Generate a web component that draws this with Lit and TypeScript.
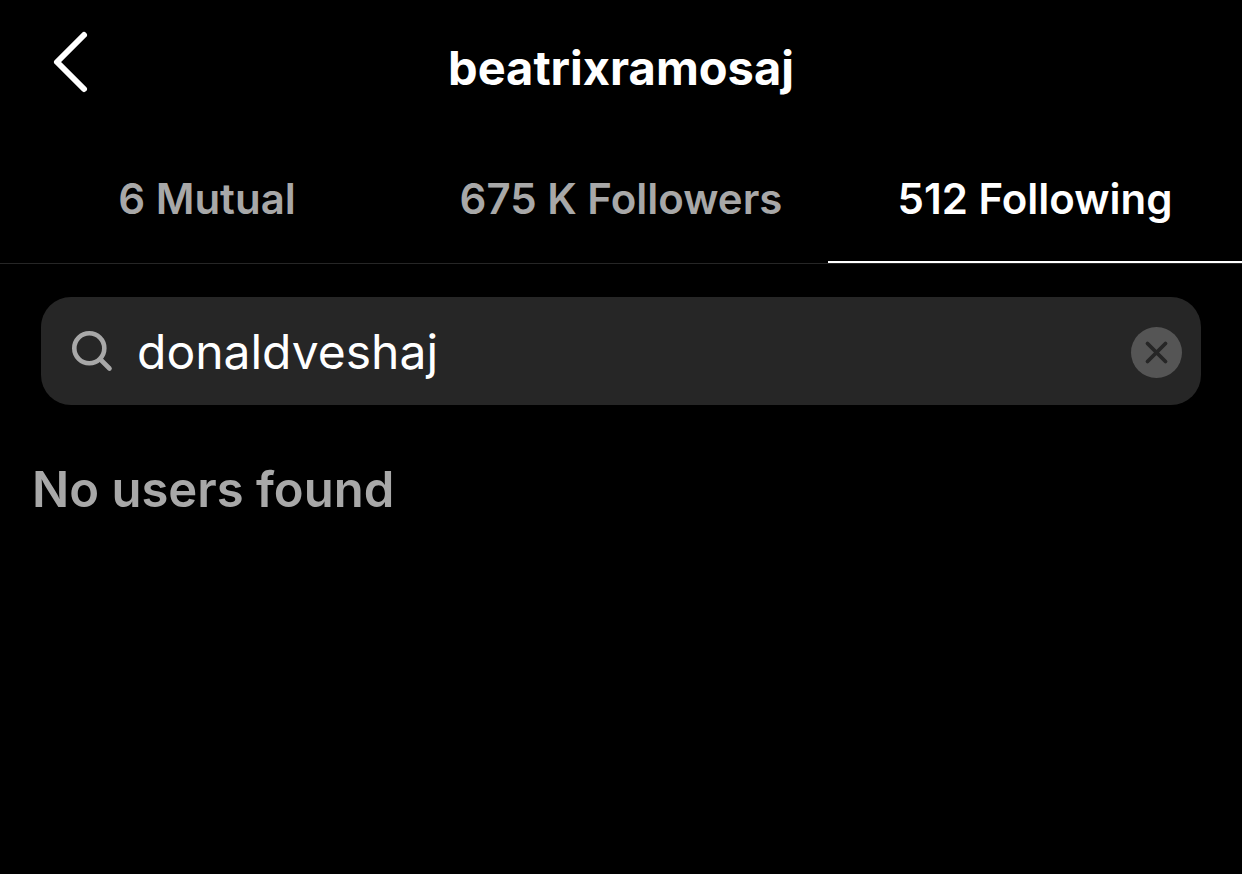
import { LitElement, html, css } from "lit";
import { customElement, state } from "lit/decorators.js";

@customElement("app-root")
class AppRoot extends LitElement {
  @state() private active = 2;
  @state() private query = "donaldveshaj";

  private tabs = ["6 Mutual", "675 K Followers", "512 Following"];

  static styles = css`
    :host {
      display: block;
      min-height: 100vh;
      background: #000;
      color: #fff;
      font-family: Inter, "Liberation Sans", sans-serif;
    }
    * {
      box-sizing: border-box;
    }
    button {
      border: 0;
      padding: 0;
      background: none;
      color: inherit;
      font: inherit;
      cursor: pointer;
    }
    svg {
      display: block;
      fill: none;
      stroke: currentColor;
      stroke-linecap: round;
      stroke-linejoin: round;
    }
    .bar {
      display: grid;
      grid-template-columns: 96px 1fr 96px;
      align-items: center;
      height: 136px;
      padding: 0 24px;
    }
    .back {
      display: flex;
      justify-content: center;
      align-items: center;
      height: 80px;
      margin-bottom: 12px;
    }
    h1 {
      margin: 0;
      text-align: center;
      font-size: 47px;
      line-height: 60px;
      font-weight: 700;
    }
    .tabs {
      display: grid;
      grid-template-columns: repeat(3, 1fr);
      height: 128px;
      border-bottom: 1px solid #262626;
    }
    .tab {
      border-bottom: 2px solid transparent;
      color: #a8a8a8;
      font-size: 42px;
      font-weight: 600;
      white-space: nowrap;
    }
    .tab.active {
      color: #fff;
      border-color: #fff;
    }
    .search {
      display: flex;
      align-items: center;
      height: 108px;
      margin: 33px 41px 0;
      padding: 2px 19px 0 30px;
      border-radius: 30px;
      background: #262626;
    }
    .lens {
      flex: none;
      color: #a8a8a8;
    }
    input {
      flex: 1;
      min-width: 0;
      margin: 0 24px;
      padding: 0;
      border: 0;
      outline: 0;
      background: none;
      color: #fff;
      font: 400 48px/64px Inter, "Liberation Sans", sans-serif;
    }
    .clear {
      flex: none;
      width: 51px;
      height: 51px;
      border-radius: 50%;
      background: #555;
      color: #262626;
    }
    .empty {
      margin: 53px 32px 0;
      color: #a8a8a8;
      font-size: 49px;
      line-height: 64px;
      font-weight: 600;
    }
  `;

  render() {
    return html`
      <header class="bar">
        <button class="back" aria-label="Back">
          <svg width="40" height="64" viewBox="0 0 40 64" stroke-width="6">
            <path d="M32 5 5 32 32 59" />
          </svg>
        </button>
        <h1>beatrixramosaj</h1>
      </header>
      <nav class="tabs" role="tablist">
        ${this.tabs.map(
          (label, i) => html`<button
            class="tab ${i === this.active ? "active" : ""}"
            role="tab"
            aria-selected=${i === this.active}
            @click=${() => (this.active = i)}
          >${label}</button>`
        )}
      </nav>
      <main>
        <div class="search">
          <svg class="lens" width="42" height="42" viewBox="0 0 42 42" stroke-width="4.6">
            <circle cx="18.3" cy="17.3" r="15" />
            <path d="M29.5 28.5 38.5 37.5" />
          </svg>
          <input
            type="text"
            aria-label="Search"
            spellcheck="false"
            .value=${this.query}
            @input=${(e: Event) => (this.query = (e.target as HTMLInputElement).value)}
          />
          <button class="clear" aria-label="Clear search" @click=${() => (this.query = "")}>
            <svg width="51" height="51" viewBox="0 0 51 51" stroke-width="3.8">
              <path d="M16.5 16.5 34.5 34.5M34.5 16.5 16.5 34.5" />
            </svg>
          </button>
        </div>
        <p class="empty">No users found</p>
      </main>
    `;
  }
}
